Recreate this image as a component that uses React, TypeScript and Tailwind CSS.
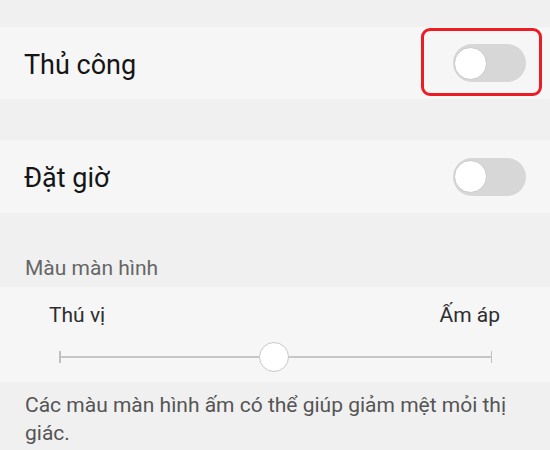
import React from "react";

function Toggle() {
  return (
    <div className="relative h-[38px] w-[73px] rounded-full bg-[#d7d7d7]">
      <div className="absolute left-[1px] top-[2.5px] h-[33px] w-[33px] rounded-full border-[1.5px] border-[#c9c9c9] bg-white" />
    </div>
  );
}

export default function App() {
  return (
    <div
      className="h-[450px] w-[550px] overflow-hidden bg-[#f0f0f0]"
      style={{ fontFamily: "Roboto, 'Noto Sans', sans-serif" }}
    >
      <div className="h-[27px]" />

      {/* Thủ công */}
      <div className="flex h-[72px] items-center justify-between bg-[#f6f6f6] pl-[24px] pr-[24px]">
        <span className="pt-[3px] text-[27px] leading-[32px] text-[#151515]">Thủ công</span>
        <div className="relative">
          <Toggle />
          <div className="absolute -left-[32px] -right-[16px] -top-[16px] -bottom-[14px] rounded-[9px] border-[3px] border-[#ec1c24]" />
        </div>
      </div>

      <div className="h-[41px]" />

      {/* Đặt giờ */}
      <div className="flex h-[73px] items-center justify-between bg-[#f6f6f6] pl-[24px] pr-[24px]">
        <span className="pt-[3px] text-[27px] leading-[32px] text-[#151515]">Đặt giờ</span>
        <Toggle />
      </div>

      {/* Màu màn hình */}
      <div className="h-[74px] pl-[25px] pt-[43px] text-[21px] leading-[24px] text-[#666666]">
        Màu màn hình
      </div>

      <div className="h-[95px] bg-[#f6f6f6] pt-[16px]">
        <div className="flex justify-between pl-[49px] pr-[50px] text-[21px] leading-[24px] text-[#2e2e2e]">
          <span>Thú vị</span>
          <span>Ấm áp</span>
        </div>
        <div className="relative ml-[59px] mt-[15px] flex h-[30px] w-[433px] items-center">
          <div className="h-[2px] w-full bg-[#c6c6c6]" />
          <div className="absolute left-0 top-[9px] h-[12px] w-[1.5px] bg-[#c0c0c0]" />
          <div className="absolute right-0 top-[9px] h-[12px] w-[1.5px] bg-[#c0c0c0]" />
          <div className="absolute left-[200px] top-0 h-[30px] w-[30px] rounded-full border-[1.5px] border-[#c8c8c8] bg-white" />
        </div>
      </div>

      <div className="pl-[25px] pr-[24px] pt-[9px] text-[21px] leading-[28px] text-[#555555]">
        Các màu màn hình ấm có thể giúp giảm mệt mỏi thị giác.
      </div>
    </div>
  );
}
